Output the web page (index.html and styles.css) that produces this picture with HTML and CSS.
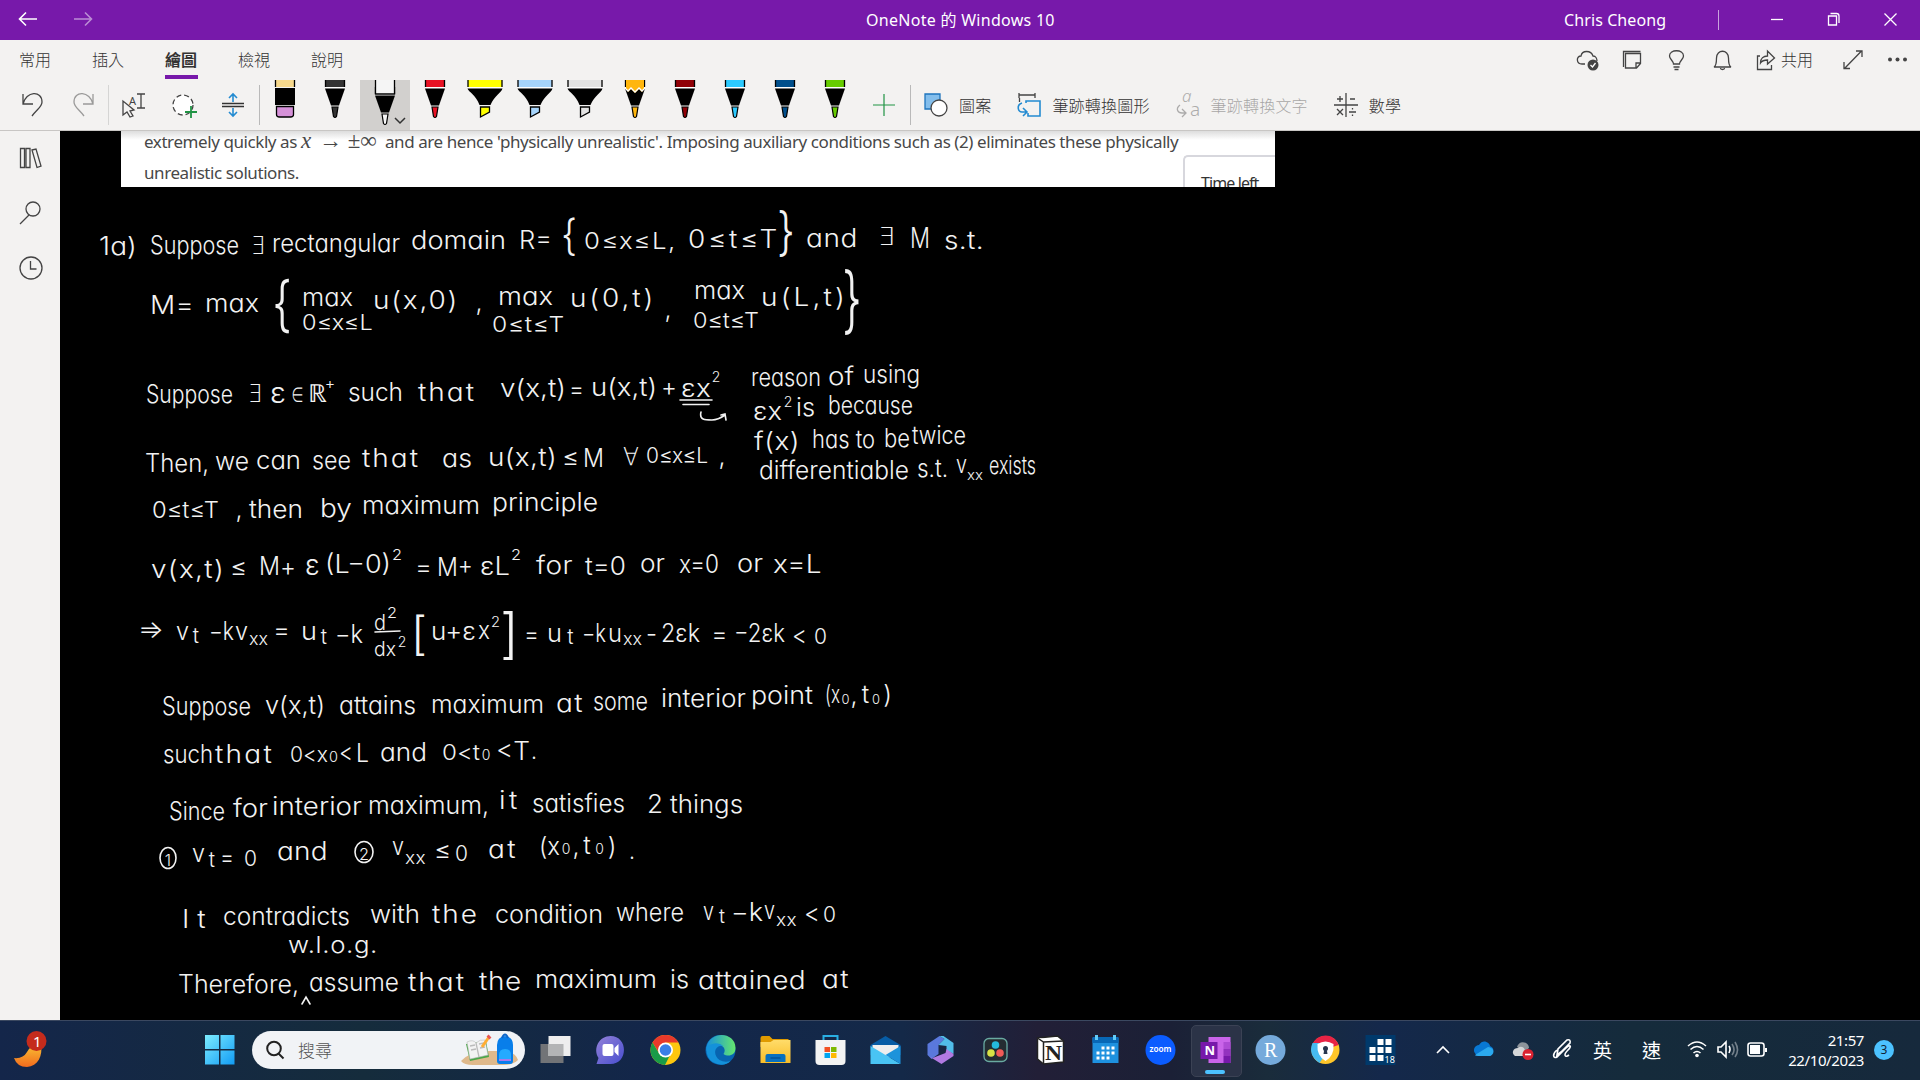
FILE: index.html
```html
<!DOCTYPE html>
<html lang="zh-Hant">
<head>
<meta charset="utf-8">
<title>OneNote 的 Windows 10</title>
<link rel="stylesheet" href="styles.css">
</head>
<body>
<header class="titlebar">
  <div class="nav">
    <svg width="20" height="18" viewBox="0 0 20 18"><path d="M19 9H2M8 2.500L1.500 9 8 15.500"/></svg>
    <svg class="faded" width="20" height="18" viewBox="0 0 20 18"><path d="M1 9h17M12 2.500L18.500 9 12 15.500"/></svg>
  </div>
  <div class="apptitle">OneNote 的 Windows 10</div>
  <div class="account"><span class="user">Chris Cheong</span><i class="bar"></i>
    <svg class="win" width="57" height="40" viewBox="0 0 57 40"><path d="M23 19.500h12"/></svg>
    <svg class="win" width="57" height="40" viewBox="0 0 57 40"><path d="M23.500 16h8v9h-8zM25.500 13.500h6q2.500 0 2.500 2.500v7"/></svg>
    <svg class="win" width="57" height="40" viewBox="0 0 57 40"><path d="M22.500 13.500l12 12m0-12l-12 12"/></svg>
  </div>
</header>
<section class="ribbon">
  <nav class="tabs">
    <span>常用</span><span>插入</span><span class="active">繪圖</span><span>檢視</span><span>說明</span>
    <div class="actions">
      <svg width="44" height="24" viewBox="0 0 44 24"><path d="M19 16h-3c-6 0-6-8-1-8 1-6 10-6 12 0 3 0 4 3 4 5"/><circle class="solid" cx="27" cy="17" r="5.500"/><path class="light" d="M24.500 17l2 2 3-4"/></svg>
      <svg width="45" height="24" viewBox="0 0 45 24"><path d="M13.500 19V3.500h17M15.500 5.500h15v10l-4 4.500h-11zM26 20v-5h5"/></svg>
      <svg width="45" height="24" viewBox="0 0 45 24"><path d="M18.500 16c0-3-4-5-4-8 0-7 14-7 14 0 0 3-4 5-4 8zM18.500 19h6M19.500 21.500h4"/></svg>
      <svg width="45" height="24" viewBox="0 0 45 24"><path d="M14 19c2-1 2.500-3 2.500-9 0-9 12-9 12 0 0 6 .5 8 2.500 9zM20.500 20c0 2 4 2 4 0"/></svg>
      <div class="share"><svg width="20" height="24" viewBox="0 0 20 24"><path d="M4 8H1.500v13.500h14V17M4.500 15c0-5 3-7 7-7V3l7 7-7 6v-4c-3 0-5 0-7 3z"/></svg><span>共用</span></div>
      <svg width="44" height="24" viewBox="0 0 44 24"><path d="M14 20L30.500 3M25 3h6v6M13 14v6.500h6"/></svg>
      <svg width="44" height="24" viewBox="0 0 44 24"><g class="solid"><circle cx="15" cy="11.500" r="2"/><circle cx="22.500" cy="11.500" r="2"/><circle cx="30" cy="11.500" r="2"/></g></svg>
    </div>
  </nav>
  <div class="tools">
    <svg class="tool" width="52" height="50" viewBox="0 0 52 50"><path d="M23 14v10h10M23 24c3-13 19-14 19-2 0 5-5 7-10 14"/></svg>
    <svg class="tool faded sep-r" width="57" height="50" viewBox="0 0 57 50"><path d="M41 14v10H31M41 24c-3-13-19-14-19-2 0 5 5 7 10 14"/></svg>
    <svg class="tool" width="49" height="50" viewBox="0 0 49 50"><path d="M14 21v14l4-3 3 5 3-1-3-5 4-1z"/><path d="M28 14h8m-4 0v14m-4 0h8"/><text x="20" y="25" font-size="11">A</text></svg>
    <svg class="tool" width="50" height="50" viewBox="0 0 50 50"><circle cx="25" cy="25" r="10" class="page dash"/><path class="green" d="M33 26v12M27 32h12"/></svg>
    <svg class="tool sep-r" width="52" height="50" viewBox="0 0 52 50"><path class="dark" d="M14 23.500h22M14 26.500h22"/><path class="blue" d="M25 22v-8m-4 4l4-4 4 4M25 28v8m-4-4l4 4 4-4"/></svg>
    <div class="pens">
      <svg class="pen" viewBox="0 0 50 50" fill="#000"><path fill="#f6d88c" d="M15.500 0h19v7h-19z"/><path fill="none" stroke="#000" d="M15.500 0v7m19-7v7"/><path d="M15 8h20v17H15z"/><path fill="#d591d8" stroke="#000" d="M16.500 26.500h17v8q0 2.500-3 2.500h-11q-3 0-3-2.500z"/></svg>
      <svg class="pen" viewBox="0 0 50 50" fill="#333"><use href="#nib"/></svg>
      <svg class="pen selected" viewBox="0 0 50 50" fill="#f5f5f5"><g transform="translate(0 7)"><use href="#nib"/></g><path stroke="#000" d="M15.500-1v15h19V-1"/><path fill="none" stroke="#333" stroke-width="1.500" d="M35 38l5 5 5-5"/></svg>
      <svg class="pen" viewBox="0 0 50 50" fill="#e81224"><use href="#nib"/></svg>
      <svg class="pen" viewBox="0 0 50 50" fill="#ff0"><use href="#marker"/></svg>
      <svg class="pen" viewBox="0 0 50 50" fill="#a6d4fb"><use href="#marker"/></svg>
      <svg class="pen" viewBox="0 0 50 50" fill="#e3e3e3"><use href="#marker"/></svg>
      <svg class="pen" viewBox="0 0 50 50" fill="#ffb60d"><use href="#nib"/><path d="M16 0h18v9l-2 3-3-3-4 4-4-4-3 3-2-4z"/><path fill="none" stroke="#fff" d="M15 8l3 3 3-3 4 4 4-4 3 3 3-3"/></svg>
      <svg class="pen" viewBox="0 0 50 50" fill="#900006"><use href="#nib"/></svg>
      <svg class="pen" viewBox="0 0 50 50" fill="#2ccaff"><use href="#nib"/></svg>
      <svg class="pen" viewBox="0 0 50 50" fill="#004f8c"><use href="#nib"/></svg>
      <svg class="pen" viewBox="0 0 50 50" fill="#66cc00"><use href="#nib"/></svg>
    </div>
    <svg class="tool sep-r" width="51" height="50" viewBox="0 0 51 50"><path class="green thin" d="M24 14v22M13 25h22"/></svg>
    <div class="cmd"><svg width="24" height="26" viewBox="0 0 24 26"><path fill="#83beec" stroke="#1e74bd" d="M1 2h15v15H1z"/><circle class="page" cx="15" cy="16" r="8"/></svg><span>圖案</span></div>
    <div class="cmd"><svg width="24" height="26" viewBox="0 0 24 26"><path d="M2 3h16M2 1v5m16-5v5M2.500 6v4"/><path class="blue" d="M9 11V9h14v15H11v-3M5 11c-6 2-4 9 0 9h4m-3-4l4 4-4 4"/></svg><span>筆跡轉換圖形</span></div>
    <div class="cmd off"><svg width="24" height="26" viewBox="0 0 24 26"><path d="M4 13c-5 4-2 8 2 8h4m-4-4l4 4-4 4"/><text x="6" y="10" font-size="17" font-style="italic">a</text><text x="14" y="24" font-size="19">a</text></svg><span>筆跡轉換文字</span></div>
    <div class="cmd"><svg width="24" height="26" viewBox="0 0 24 26"><path d="M12 1v24M0 13h24M3 7h6M6 4v6M16 7h5M3 17l6 6m0-6l-6 6M15 20h7M18.500 16v1.500M18.500 22.500v1.500"/></svg><span>數學</span></div>
  </div>
</section>
<main class="work">
  <aside class="rail">
    <svg width="24" height="28" viewBox="0 0 24 28"><path d="M1.500 4.500h4v19h-4zM7 4.500h4v19H7zM13 6l4-1 5 17-4 1.500z"/></svg>
    <svg width="24" height="28" viewBox="0 0 24 28"><circle cx="14" cy="10" r="7"/><path d="M10 16L1 25"/></svg>
    <svg width="24" height="28" viewBox="0 0 24 28"><circle cx="12" cy="14" r="11"/><path d="M11.500 7v8h6"/></svg>
  </aside>
  <div class="canvas">
    <div class="clip">
      <div class="prose"><p class="l1">extremely quickly as <em>x</em><span class="sym">→ ±∞</span> and are hence 'physically unrealistic'. Imposing auxiliary conditions such as (2) eliminates these physically</p><p class="l2">unrealistic solutions.</p></div>
      <div class="timer">Time left</div>
    </div>
    <svg class="ink" viewBox="60 131 1860 889">
      <path d="M680 400h32M683 404.500h26M701 412c-2 8 4 8 11 8q6 0 13-5m-4 0l4-1 1 6M375 632l25-1M302 1004l4-7 4 7"/>
      <ellipse cx="168" cy="858" rx="8" ry="10.500"/><ellipse cx="364" cy="852" rx="9" ry="10.500"/>
      <g id="words" transform="translate(0 1.500)"></g>
    </svg>
  </div>
</main>
<footer class="taskbar">
  <div class="weather"><svg width="34" height="38" viewBox="0 0 34 38"><path fill="url(#moon)" d="M0 27q9 1 13-6Q18 12 27 13c2 12-3 22-14 23Q3 36 0 27z"/><ellipse cx="22.500" cy="10" rx="10" ry="10" fill="#c42b1c"/><text x="19" y="15.500" font-size="15" fill="#fff">1</text></svg></div>
  <svg class="start" width="30" height="30" viewBox="0 0 30 30"><path fill="url(#win)" d="M0 0h14v14H0zM15.500 0h14v14h-14zM0 15.500h14v14H0zM15.500 15.500h14v14h-14z"/></svg>
  <div class="search"><svg width="19" height="20" viewBox="0 0 19 20"><circle cx="8" cy="8.500" r="6.800"/><path d="M12.500 13.500l5 5"/></svg><span>搜尋</span>
    <svg class="art" width="58" height="34" viewBox="0 0 58 34"><path fill="#dfb98b" d="M0 28q10-10 25-10h20q10 2 12 9-5 5-14 5H12Q3 32 0 28z"/><path fill="#4ba648" d="M5 11l20-3 3 16-19 4z"/><path fill="#f3f3f3" stroke="#bbb" stroke-width=".6" d="M6 9q6-3 9 1 4-4 9-3l3 15-9 2-9 2z"/><path stroke="#bbb" fill="none" d="M15 10l3 14M9 13l5-1M10 17l5-1M18 11l5-1M19 15l5-1"/><path stroke="#ffad32" stroke-width="3" d="M21 14l7-10"/><path stroke="#e85552" stroke-width="4" d="M27 5l2-2"/><path fill="#087eea" d="M36 28V12q0-8 8-9 8 1 8 9v16q0 3-3 3H39q-3 0-3-3z"/><path fill="#24aaff" d="M38 22q0-6 6-6t6 6v4H38z"/><path stroke="#a67aed" stroke-width="2" d="M38 27h12"/><path fill="none" stroke="#0d65c8" stroke-width="2" d="M41 5q3-7 6 0"/></svg></div>
  <div class="apps">
    <svg viewBox="0 0 30 30"><path fill="#727477" d="M0 9h23v19H0z"/><path fill="#eee" d="M8 1h22v20H8z"/><path fill="#b3b4b5" d="M8 9h15v12H8z"/></svg>
    <svg viewBox="0 0 30 30"><path fill="url(#chat)" d="M15 1c18 0 18 28 0 28H1l2-6C-3 13 4 1 15 1z"/><rect x="7" y="9" width="11" height="12" rx="2" fill="#fff"/><path fill="#fff" d="M19 13l4-4v12l-4-4z"/></svg>
    <svg viewBox="0 0 30 30"><circle cx="15" cy="15" r="15" fill="#fdc70e"/><path fill="#e8392b" d="M2 7.500a15 15 0 0 1 26 0H15l-6 11z"/><path fill="#199b48" d="M2 7.500L9 19l10 2-4.500 9A15 15 0 0 1 2 7.500z"/><circle cx="15" cy="15" r="7.500" fill="#fff"/><circle cx="15" cy="15" r="5.800" fill="#397fe7"/></svg>
    <svg viewBox="0 0 30 30"><circle cx="15" cy="15" r="15" fill="#0864b0"/><path fill="url(#edge)" d="M1 12C5-5 30-3 30 13c0 8-8 9-12 6 4-6-3-11-9-8q-5 1-8 5z"/><path fill="#1491da" d="M1 12q10-7 17-1c-8-2-12 8-4 14q5 3 11 1Q18 33 7 27 0 22 1 12z"/></svg>
    <svg viewBox="0 0 30 30"><path fill="#e09b00" d="M0 3q0-2 2-2h7l3 3h16v8H0z"/><path fill="url(#folder)" d="M0 7h10l3-2h17v23H0z"/><path fill="#0870bf" d="M5 27v-6q0-2 2-2h16q2 0 2 2v6z"/><path stroke="#004e93" d="M10 23h10"/></svg>
    <svg viewBox="0 0 30 30"><path fill="none" stroke="#29afe3" stroke-width="2" d="M8 6V1h14v5"/><path fill="#f3f3f3" d="M0 5h30v21q0 4-4 4H4q-4 0-4-4z"/><path fill="#f25022" d="M9 12h5.500v5H9z"/><path fill="#7fba00" d="M15.500 12H21v5h-5.500z"/><path fill="#00a4ef" d="M9 18h5.500v5H9z"/><path fill="#ffb900" d="M15.500 18H21v5h-5.500z"/></svg>
    <svg viewBox="0 0 30 30"><path fill="#075ca5" d="M0 10L15 1l15 9v10H0z"/><path fill="#eee" d="M2 10h26v7l-13 8L2 17z"/><path fill="#49c4f4" d="M0 11l30 18H0z"/><path fill="#1c93db" d="M30 11L15 20l15 9z"/></svg>
    <svg viewBox="0 0 30 30"><path fill="#5a78dc" d="M2 9L14 1l5 3-6 6v9l-7 5-4-4z"/><path fill="#51bde9" d="M14 1l4 0 10 7v11l-7-4v-4l-8-1 6-6z"/><path fill="#b17ae2" d="M3 21l4 2 13-5 1-4 7 5v2l-12 8z"/></svg>
    <svg viewBox="0 0 30 30"><rect x="3.500" y="3.500" width="23" height="23" rx="5" fill="#242c32" stroke="#69aaa1"/><circle cx="15" cy="10" r="3.800" fill="#24b9dd"/><circle cx="10.500" cy="18" r="3.800" fill="#d8e245"/><circle cx="19.500" cy="18" r="3.800" fill="#f05a57"/></svg>
    <svg class="notion" viewBox="0 0 30 30"><path fill="#fff" stroke="#222" stroke-width="1.500" d="M2 3l20-2 6 5v21L8 29l-6-5z"/><path fill="#fff" stroke="#222" stroke-width="1.500" d="M2 3l6 4 20-1M8 7v22"/><text x="9.500" y="24.500" font-size="21" font-weight="700" textLength="17" lengthAdjust="spacingAndGlyphs">N</text></svg>
    <svg viewBox="0 0 30 30"><path fill="#1e91df" d="M2 3h26v25H2z"/><path fill="#0868b6" d="M2 2h26v6H2z"/><path stroke="#62cbf7" stroke-width="3" d="M6 0v5M24 0v5"/><path stroke="#fff" stroke-width="3" stroke-dasharray="3 2" d="M11 13h13M6 18h18M6 23h13"/></svg>
    <svg viewBox="0 0 30 30"><circle cx="15" cy="15" r="15" fill="#0b5cff"/><text x="4" y="17" font-size="8" font-weight="600" textLength="22" lengthAdjust="spacingAndGlyphs">zoom</text></svg>
    <div class="current"><svg viewBox="0 0 30 30"><path fill="#ca64ea" d="M8 2h22v26H8z"/><path fill="#ae4bd5" d="M23 7h7v7h-7z"/><path fill="#9332bf" d="M23 14h7v7h-7z"/><path fill="#7719aa" d="M23 21h7v7h-7zM0 7h17v17H0z"/><text x="4" y="20" font-size="13" font-weight="700">N</text></svg></div>
    <svg class="rstat" viewBox="0 0 30 30"><circle cx="15" cy="15" r="15" fill="#75aadb"/><text x="8.500" y="21.500" font-size="20">R</text></svg>
    <svg viewBox="0 0 30 30"><circle cx="15" cy="15" r="14" fill="#ffc629"/><path fill="#e82345" d="M2 9C8-3 24-2 28 10l-6 2-16 4z"/><path fill="#46baf0" d="M2 8q-5 12 7 20l5-7-5-13z"/><path fill="#fff" d="M7 9q8-5 16 0 1 12-8 17Q6 21 7 9z"/><circle cx="15" cy="13.500" r="2.500" fill="#27364e"/><path fill="#27364e" d="M14 13h2l1 6h-4z"/></svg>
    <svg viewBox="0 0 30 30"><path fill="#00396b" d="M0 0h30v30H0z"/><path fill="#fff" d="M12 4h6v6h-6zM20 4h6v6h-6zM4 12h6v6H4zM12 12h6v6h-6zM20 12h6v6h-6zM4 20h6v6H4zM12 20h6v6h-6z"/><text x="19" y="28" font-size="9">18</text></svg>
  </div>
  <div class="tray">
    <svg width="40" height="30" viewBox="0 0 40 30"><path d="M14 18l6-6 6 6"/></svg>
    <svg width="40" height="30" viewBox="0 0 40 30"><path class="f" fill="#0878d4" d="M14 20c-6-4-2-10 2-10 4-7 11-2 11 1 5 2 4 7 0 10z"/><path class="f" fill="#2ba9ee" d="M12 20l13-8c8 1 6 9 1 9H15q-3 0-3-1z"/></svg>
    <svg width="40" height="30" viewBox="0 0 40 30"><path class="f" fill="#8d949b" d="M14 12c2-8 12-5 12 1l-5 4z"/><path class="f" fill="#d4d6d8" d="M12 21c-4-3-2-8 3-8 4-3 8 0 8 8z"/><circle class="f" cx="25" cy="19.500" r="5.500" fill="#d92231"/><path d="M22 19.500h6"/></svg>
    <svg width="40" height="30" viewBox="0 0 40 30"><path d="M14 20l1-6 9-9q4-1 3 3l-9 9zM14 15c-5 4-4 9 0 7l7-7c7-7 8-4 4 0-5 5-3 8 1 5"/></svg>
    <span class="ime">英</span><span class="ime">速</span>
    <svg class="wifi" width="30" height="30" viewBox="0 0 30 30"><path d="M6 11q9-8 18 0M8.500 14.500q6.500-6 13 0M11.500 18q3.500-3 7 0"/><circle class="f" cx="15" cy="20.500" r="1.800" fill="#fff"/></svg>
    <svg width="30" height="30" viewBox="0 0 30 30"><path d="M6 12h3l5-5v15l-5-5H6zM17 11q2 3 0 7"/><path opacity=".4" d="M20 9q4 6 0 11M23 7q5 8 0 15"/></svg>
    <svg width="30" height="30" viewBox="0 0 30 30"><rect x="6" y="8" width="16" height="13" rx="2.500"/><path class="f" fill="#fff" d="M8 10h10v9H8zM23 13h2v4h-2z"/></svg>
    <div class="clock"><span>21:57</span><span>22/10/2023</span></div><b>3</b>
  </div>
</footer>
<svg class="defs" width="0" height="0" fill="inherit"><defs>
  <g id="nib"><path d="M15 0h20v7H15z"/><path fill="none" stroke="#000" d="M15.500 0v7m19-7v7"/><path fill="#fff" d="M15 7h20v1.500H15z"/><path fill="#000" d="M15 8.500h20L29 25.500h-8z"/><path stroke="#000" stroke-width="1.200" d="M22 27h6l-1.500 9.500q-1.500 2-3 0z"/></g>
  <g id="marker"><path d="M8 0h34v7H8z"/><path fill="none" stroke="#000" d="M8 0v7M42 0v7"/><path fill="#fff" d="M7.500 7h35v1.500h-35z"/><path fill="#000" d="M7.500 8.500h35c-1 4-8 7-12 16.500h-11C16 15 8.500 12 7.500 8.500z"/><path stroke="#000" d="M20.500 27h9v5l-9 5z"/></g>
  <linearGradient id="moon" x2="0" y2="1"><stop stop-color="#f9c333"/><stop offset="1" stop-color="#f26b1e"/></linearGradient>
  <linearGradient id="win" x2="1" y2="1"><stop stop-color="#7cecff"/><stop offset="1" stop-color="#129cf4"/></linearGradient>
  <linearGradient id="chat" x2="1" y2="1"><stop stop-color="#9381d8"/><stop offset="1" stop-color="#484ecf"/></linearGradient>
  <linearGradient id="edge" x2="1"><stop stop-color="#168edd"/><stop offset="1" stop-color="#65e76d"/></linearGradient>
  <linearGradient id="folder" x2="0" y2="1"><stop stop-color="#ffdc6a"/><stop offset="1" stop-color="#f9bd27"/></linearGradient>
</defs></svg>
<script src="ink.js"></script>
</body>
</html>
```
FILE: styles.css
```css
* { box-sizing: border-box; }
body { margin: 0; width: 1920px; height: 1080px; overflow: hidden; display: flex; flex-direction: column; font-family: "Noto Sans", "Noto Sans CJK TC", sans-serif; color: #333; background: #000; }
svg { display: block; flex: none; stroke: #444; stroke-width: 1.3; }
svg:not([fill]) { fill: none; }
svg text { stroke: none; fill: #444; }
.defs { position: absolute; }

.titlebar { height: 40px; flex: none; background: #7719aa; color: #fff; display: grid; grid-template-columns: 1fr auto 1fr; font-size: 16px; line-height: 40px; }
.titlebar svg { stroke: #fff; }
.nav { display: flex; gap: 35px; padding: 10px 0 0 18px; }
.nav svg { stroke-width: 1.6; }
.faded { opacity: .5; }
.apptitle { width: 188px; white-space: nowrap; letter-spacing: .28px; }
.account { display: flex; justify-content: flex-end; }
.user { width: 154px; white-space: nowrap; letter-spacing: .1px; }
.bar { width: 1px; height: 20px; background: #c9a3dd; margin: 10px 29px 0 0; }
.account { padding-right: 1px; }

.ribbon { height: 91px; flex: none; background: #f3f2f1; border-bottom: 1px solid #c8c6c4; font-size: 16px; }
.tabs { height: 40px; display: flex; padding-left: 19px; }
.tabs > span { width: 33px; margin-right: 40px; line-height: 39px; height: 39px; font-family: "Noto Sans CJK TC", sans-serif; font-weight: 300; white-space: nowrap; }
.tabs > .active { border-bottom: 4px solid #7719aa; font-weight: 700; }
.actions { margin-left: auto; display: flex; padding: 8px 1px 0 0; }
.actions .solid { fill: #444; stroke: none; }
.actions .light { stroke: #fff; }
.share { width: 86px; display: flex; gap: 5px; padding-left: 11px; line-height: 24px; font-weight: 300; }
.tools { height: 50px; display: flex; }
.tool { overflow: visible; }
.sep-r { background: linear-gradient(#b9b9b9, #b9b9b9) right 5px / 1px 40px no-repeat; }
.page { fill: #fff; }
.dash { stroke-dasharray: 5 3; }
.green { stroke: #209344; stroke-width: 1.8; }
.thin { stroke-width: 1.2; }
.blue { stroke: #238bd1; stroke-width: 1.6; }
.dark { stroke: #333; }
.pens { display: flex; }
.pen { width: 50px; height: 50px; stroke: none; overflow: hidden; }
.selected { background: #d2d0ce; }
.cmd { display: flex; gap: 11px; align-items: center; margin-left: 13px; white-space: nowrap; font-weight: 300; letter-spacing: .2px; }
.cmd + .cmd { margin-left: 26px; }
.cmd.off { opacity: .4; }
.cmd svg { overflow: visible; }

.work { flex: 1; min-height: 0; display: flex; }
.rail { width: 60px; background: #f3f2f1; display: flex; flex-direction: column; align-items: center; gap: 27px; padding-top: 13px; padding-left: 1px; }
.canvas { flex: 1; background: #000; position: relative; }
.clip { margin-left: 61px; width: 1154px; height: 56px; background: linear-gradient(#ddd, #fff 9px); display: flex; overflow: hidden; }
.prose { padding-left: 23px; color: #484848; font-size: 17px; width: 1062px; white-space: nowrap; letter-spacing: -.42px; }
.prose p { margin: 0; line-height: 21px; height: 21px; }
.prose .l2 { margin-top: 10px; }
.prose em, .sym { display: inline-block; font-family: "Liberation Serif", "DejaVu Serif", serif; font-size: 23px; line-height: 20px; letter-spacing: 0; }
.prose em { width: 18px; }
.sym { width: 62px; }
.timer { flex: 1; margin-top: 24px; border: 2px solid #d7d7dd; border-width: 2px 0 0 2px; border-radius: 5px 0 0; background: #fff; padding: 14px 0 0 16px; font-size: 16px; line-height: 24px; letter-spacing: -.9px; white-space: nowrap; }
.ink { position: absolute; inset: 0; width: 1860px; height: 889px; stroke: #f2f2f2; stroke-width: 1.6; stroke-linecap: round; }
.ink text { fill: #f2f2f2; font-family: Inter, "DejaVu Sans", sans-serif; font-weight: 300; font-feature-settings: "cv11"; }

.taskbar { height: 60px; flex: none; border-top: 1px solid #3b4860; background: linear-gradient(90deg, #14264a, #152c3c 19%, #13264a 34%, #142948 47%, #221f37 54%, #1b2036 61%, #1a2c3b 66%, #14284b 72%, #152b3b 85%, #16293c); display: flex; align-items: center; color: #fff; }
.taskbar > * { margin-top: -2px; }
.taskbar svg { stroke: none; }
.taskbar svg text { font-family: "Noto Sans", sans-serif; }
.weather { width: 205px; padding-left: 14px; }
.weather svg text { fill: #fff; }
.start { margin-right: 17px; }
.search { width: 273px; height: 38px; border-radius: 19px; background: #f1f3f6; color: #555; display: flex; align-items: center; padding: 0 6px 0 14px; font-size: 17px; font-weight: 300; }
.taskbar .search > svg:first-child { stroke: #222; stroke-width: 2; }
.search span { margin: 0 auto 0 13px; }
.apps { display: flex; padding-left: 3px; }
.apps > svg, .apps > .current { width: 55px; height: 30px; }
.current { position: relative; }
.current::before { content: ""; position: absolute; left: 3px; top: -10px; width: 49px; height: 50px; border-radius: 5px; border: 1px solid #3b4254; background: #2b3347; }
.current::after { content: ""; position: absolute; left: 17px; bottom: -9px; width: 20px; height: 4px; border-radius: 2px; background: #4cc2ff; }
.current svg { position: relative; width: 55px; height: 30px; }
.apps text { fill: #fff; }
.taskbar .notion text { fill: #222; font-family: "Liberation Serif", serif; }
.taskbar .rstat text { font-family: "Liberation Serif", serif; }
.tray { display: flex; align-items: center; padding-left: 15px; flex: 1; }
.tray svg { stroke: #fff; stroke-width: 1.6; }
.tray .f { stroke: none; }
.ime { width: 49px; text-align: center; font-size: 19px; margin-left: -5px; margin-right: 5px; }
.wifi { margin-left: 1px; }
.clock { width: 92px; display: flex; flex-direction: column; text-align: right; font-size: 15px; line-height: 20px; letter-spacing: -.4px; }
.tray b { width: 20px; height: 20px; margin-left: 10px; border-radius: 50%; background: #4cc2ff; color: #123; text-align: center; font-size: 12px; line-height: 20px; font-weight: 400; }
```
FILE: ink.js
```js
// Handwritten notes: text, left, baseline, right, size (25 unless given)
const words = [
["1a)",99,253,137],["Suppose",150,252,239],["∃",251,252,265],["rectangular",272,250,400],["domain",411,247,506],["R=",519,247,552],["{",561,248,577,42],["0≤x≤L,",584,247,677,23],["0≤t≤T",688,246,780,25],["}",777,248,795,52],["and",806,245,858],["∃",878,243,895],["M",910,246,930,28],["s.t.",944,247,984],
["M=",150,312,194],["max",205,310,259],["{",272,323,292,60],["max",302,304,353],["0≤x≤L",302,328,373,21],["u(x,0)",373,307,459],[",",475,309,483],["max",498,303,553],["0≤t≤T",492,330,565,22],["u(0,t)",570,305,656],[",",663,316,673],["max",694,297,745],["0≤t≤T",693,326,759,22],["u(L,t)",761,304,848],["}",842,323,862,73],
["Suppose",146,401,233],["∃",248,400,262],["ε",270,401,286,28],["∈",291,400,304],["ℝ",308,400,327],["+",324,387,336,16],["such",348,399,403],["that",418,399,476],["v(x,t)",500,395,566],["=",569,396,584],["u(x,t)",591,394,657],["+",661,394,677],["εx",681,395,711],["2",711,380,721,14],
["reason",751,384,821],["of",828,383,854],["using",863,381,920],["εx",753,418,782],["2",783,405,793,14],["is",796,414,815],["because",828,412,913],["f(x)",754,448,800],["has to",812,446,875],["be",884,445,910],["twice",912,442,966],["differentiable",759,477,909],["s.t.",917,475,948],["v",956,471,967],["xx",967,478,983,14],["exists",989,472,1036],
["Then,",145,470,209],["we",215,468,249],["can",256,467,301],["see",312,467,351],["that",362,465,420],["as",442,465,472],["u(x,t)",488,464,557],["≤",562,464,579],["M",583,465,604],["∀",623,463,639],["0≤x≤L",646,461,708,22],[",",718,463,726],
["0≤t≤T",152,516,219,23],[",",235,516,243],["then",249,516,303],["by",320,515,352],["maximum",362,512,480],["principle",492,509,598],
["v(x,t)",151,576,225],["≤",230,574,247],["M",259,573,280],["+",280,574,296],["ε",304,573,321,28],["(L−0)",325,571,391],["2",392,558,402,15],["=",415,574,432],["M+",437,574,473],["εL",480,573,510],["2",511,558,521,15],["for",536,572,573],["t=0",585,573,626],["or",640,570,665],["x=0",679,571,719],["or",737,570,763],["x=L",773,571,822],
["⇒",138,636,164],["v",176,638,189],["t",190,641,202,21],["−k",209,638,234],["v",235,638,248],["xx",249,643,268,17],["=",273,637,290],["u",301,638,317],["t",318,642,330,21],["−k",335,641,363],["d",374,628,386,21],["2",387,616,397,15],["dx",374,654,396,20],["2",397,645,407,14],["[",409,648,429,46],["u+ε",431,638,476],["x",478,637,490],["2",491,625,500,14],["]",498,651,521,54],["=",524,641,539],["u",547,640,562],["t",563,642,578,21],["−k",582,640,606],["u",608,640,622],["xx",623,643,642,17],["−",646,640,657],["2εk",661,640,700],["=",710,641,729],["−2εk",734,640,785],["<",792,642,807],["0",813,642,828,21],
["Suppose",162,713,251],["v(x,t)",265,712,325],["attains",339,712,416],["maximum",431,711,544],["at",556,710,584],["some",593,708,648],["interior",661,705,746],["point",751,702,813],["(x",825,701,840],["0",841,702,850,13],[",",850,702,858],["t",860,701,871],["0",872,702,880,13],[")",882,701,893],
["such",163,761,213],["that",215,761,274],["0<x",290,760,328,22],["0",329,760,338,14],["<",339,759,353],["L",356,760,369],["and",380,759,427],["0<t",442,758,480,22],["0",481,758,491,14],["<T",496,758,530],[".",531,757,537],
["Since",169,818,225],["for",233,815,268],["interior",272,813,362],["maximum,",368,812,489],["it",499,807,521],["satisfies",532,810,625],["2",647,811,663],["things",670,811,743],
["1",164,864,172,16],["v",192,860,205],["t",206,865,218,21],["=",220,864,234],["0",244,864,257,21],["and",277,858,328],["2",359,858,369,16],["v",392,853,404],["xx",405,862,426,17],["≤",434,857,451],["0",455,859,468,22],["at",488,856,518],["(x",539,853,560],["0",561,852,571,14],[",",572,853,580],["t",581,852,593],["0",594,852,605,14],[")",606,853,618],[".",629,857,635],
["It",182,926,213],["contradicts",223,923,350],["with",370,921,420],["the",432,921,479],["condition",495,921,603],["where",616,919,684],["v",703,918,714],["t",715,921,729,20],["−k",731,919,763],["v",764,917,775],["xx",776,924,797,17],["<",804,920,820],["0",823,920,836,22],
["w.l.o.g.",288,951,378,23],
["Therefore,",178,991,299],["assume",309,989,399],["that",408,989,466],["the",479,988,522],["maximum",535,986,657],["is",670,986,689],["attained",698,987,806],["at",822,986,850]
];
const maxStretch = 1.12;
const ink = document.getElementById("words");
for (const [label, left, base, right, size = 25] of words) {
  const t = document.createElementNS("http://www.w3.org/2000/svg", "text");
  const width = right - left;
  t.setAttribute("x", left);
  t.setAttribute("y", base);
  t.setAttribute("font-size", size);
  t.textContent = label;
  ink.append(t);
  const natural = t.getComputedTextLength();
  const slack = width / maxStretch - natural;
  if (slack > 0 && label.length === 1) {
    t.setAttribute("x", (left + right) / 2);
    t.setAttribute("text-anchor", "middle");
    continue;
  }
  if (slack > 0) t.setAttribute("letter-spacing", slack / label.length);
  t.setAttribute("textLength", width);
  t.setAttribute("lengthAdjust", "spacingAndGlyphs");
}
```
